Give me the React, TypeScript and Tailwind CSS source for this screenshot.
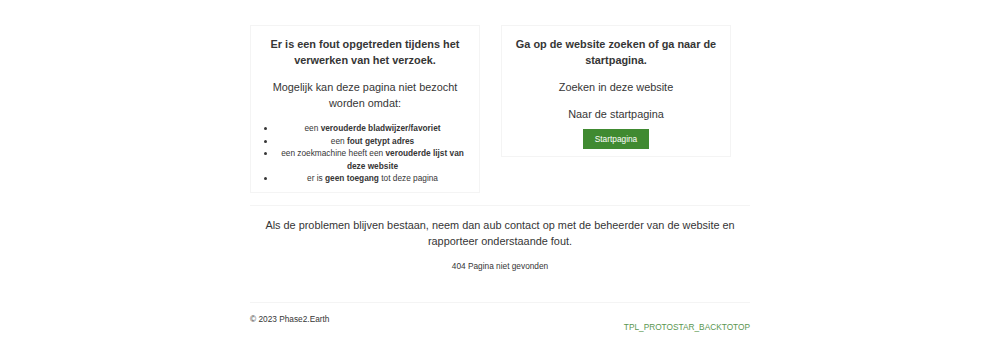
export default function App() {
  return (
    <div className="min-h-[344px] bg-white text-[#363636] font-['Liberation_Sans',Arial,sans-serif]">
      <div className="w-[500px] mx-auto pt-[25px]">
        <div className="grid grid-cols-[230px_230px] gap-x-[21px] items-start">
          <div className="border border-[#f4f4f4] px-[10px] pt-[10px] pb-[7px] text-center">
            <h2 className="text-[10.9px] leading-[16px] font-bold">
              Er is een fout opgetreden tijdens het verwerken van het verzoek.
            </h2>
            <p className="mt-[11px] text-[10.9px] leading-[16px]">
              Mogelijk kan deze pagina niet bezocht worden omdat:
            </p>
            <ul className="mt-[11px] pl-[15px] list-disc text-[8.3px] leading-[12.5px]">
              <li>
                een <b>verouderde bladwijzer/favoriet</b>
              </li>
              <li>
                een <b>fout getypt adres</b>
              </li>
              <li>
                een zoekmachine heeft een <b>verouderde lijst van deze website</b>
              </li>
              <li>
                er is <b>geen toegang</b> tot deze pagina
              </li>
            </ul>
          </div>
          <div className="border border-[#f4f4f4] px-[10px] pt-[10px] pb-[7px] text-center">
            <h2 className="text-[10.9px] leading-[16px] font-bold">
              Ga op de website zoeken of ga naar de startpagina.
            </h2>
            <p className="mt-[11px] text-[10.9px] leading-[16px]">
              Zoeken in deze website
            </p>
            <p className="mt-[11px] text-[10.9px] leading-[16px]">
              Naar de startpagina
            </p>
            <a
              href="#"
              className="inline-block mt-[7px] w-[66px] h-[20px] leading-[20px] bg-[#408a31] text-white text-[8.3px]"
            >
              Startpagina
            </a>
          </div>
        </div>

        <hr className="mt-[12px] border-t border-[#f4f4f4]" />

        <div className="text-center pt-[11px]">
          <p className="text-[10.9px] leading-[16px]">
            Als de problemen blijven bestaan, neem dan aub contact op met de
            beheerder van de website en rapporteer onderstaande fout.
          </p>
          <p className="mt-[11px] text-[8.3px] leading-[12px]">
            404 Pagina niet gevonden
          </p>
        </div>

        <hr className="mt-[30px] border-t border-[#f4f4f4]" />

        <div className="flex justify-between items-start pt-[10px] text-[8.3px] leading-[12px]">
          <p>© 2023 Phase2.Earth</p>
          <a href="#" className="mt-[8px] text-[#5a9650]">
            TPL_PROTOSTAR_BACKTOTOP
          </a>
        </div>
      </div>
    </div>
  );
}
